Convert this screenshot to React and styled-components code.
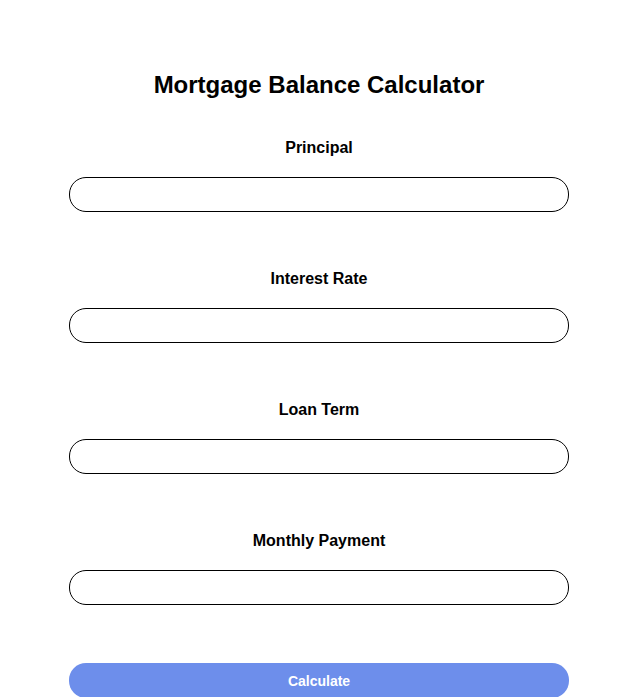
import React, { useState } from 'react'
import styled, { createGlobalStyle } from 'styled-components'

const Global = createGlobalStyle`
  html, body {
    margin: 0;
    padding: 0;
    background: #fff;
    overflow: hidden;
  }
  body {
    font-family: "Liberation Sans", Arial, sans-serif;
    color: #000;
  }
`

const Page = styled.div`
  width: 500px;
  padding: 71px 0 0 69px;
`

const Title = styled.h1`
  margin: 0 0 40px;
  font-size: 24px;
  line-height: 28px;
  font-weight: 700;
  text-align: center;
`

const Field = styled.div`
  display: flex;
  flex-direction: column;
  margin-bottom: 58px;
`

const Label = styled.label`
  display: block;
  font-size: 16px;
  line-height: 18px;
  font-weight: 700;
  text-align: center;
  margin-bottom: 20px;
`

const Input = styled.input`
  box-sizing: border-box;
  width: 100%;
  height: 35px;
  border: 1px solid #000;
  border-radius: 17px;
  padding: 0 16px;
  font-family: inherit;
  font-size: 14px;
  outline: none;
  background: #fff;
`

const Button = styled.button`
  display: block;
  width: 100%;
  height: 35px;
  padding: 0;
  border: none;
  border-radius: 17px;
  background: #6d8eeb;
  color: #fff;
  font-family: inherit;
  font-size: 14px;
  font-weight: 700;
  cursor: pointer;
`

const fields = [
  { key: 'principal', label: 'Principal' },
  { key: 'rate', label: 'Interest Rate' },
  { key: 'term', label: 'Loan Term' },
  { key: 'payment', label: 'Monthly Payment' },
]

const App = () => {
  const [values, setValues] = useState({})
  return (
    <Page>
      <Global />
      <Title>Mortgage Balance Calculator</Title>
      {fields.map(f => (
        <Field key={f.key}>
          <Label htmlFor={f.key}>{f.label}</Label>
          <Input
            id={f.key}
            value={values[f.key] || ''}
            onChange={e => setValues({ ...values, [f.key]: e.target.value })}
          />
        </Field>
      ))}
      <Button>Calculate</Button>
    </Page>
  )
}

export default App
